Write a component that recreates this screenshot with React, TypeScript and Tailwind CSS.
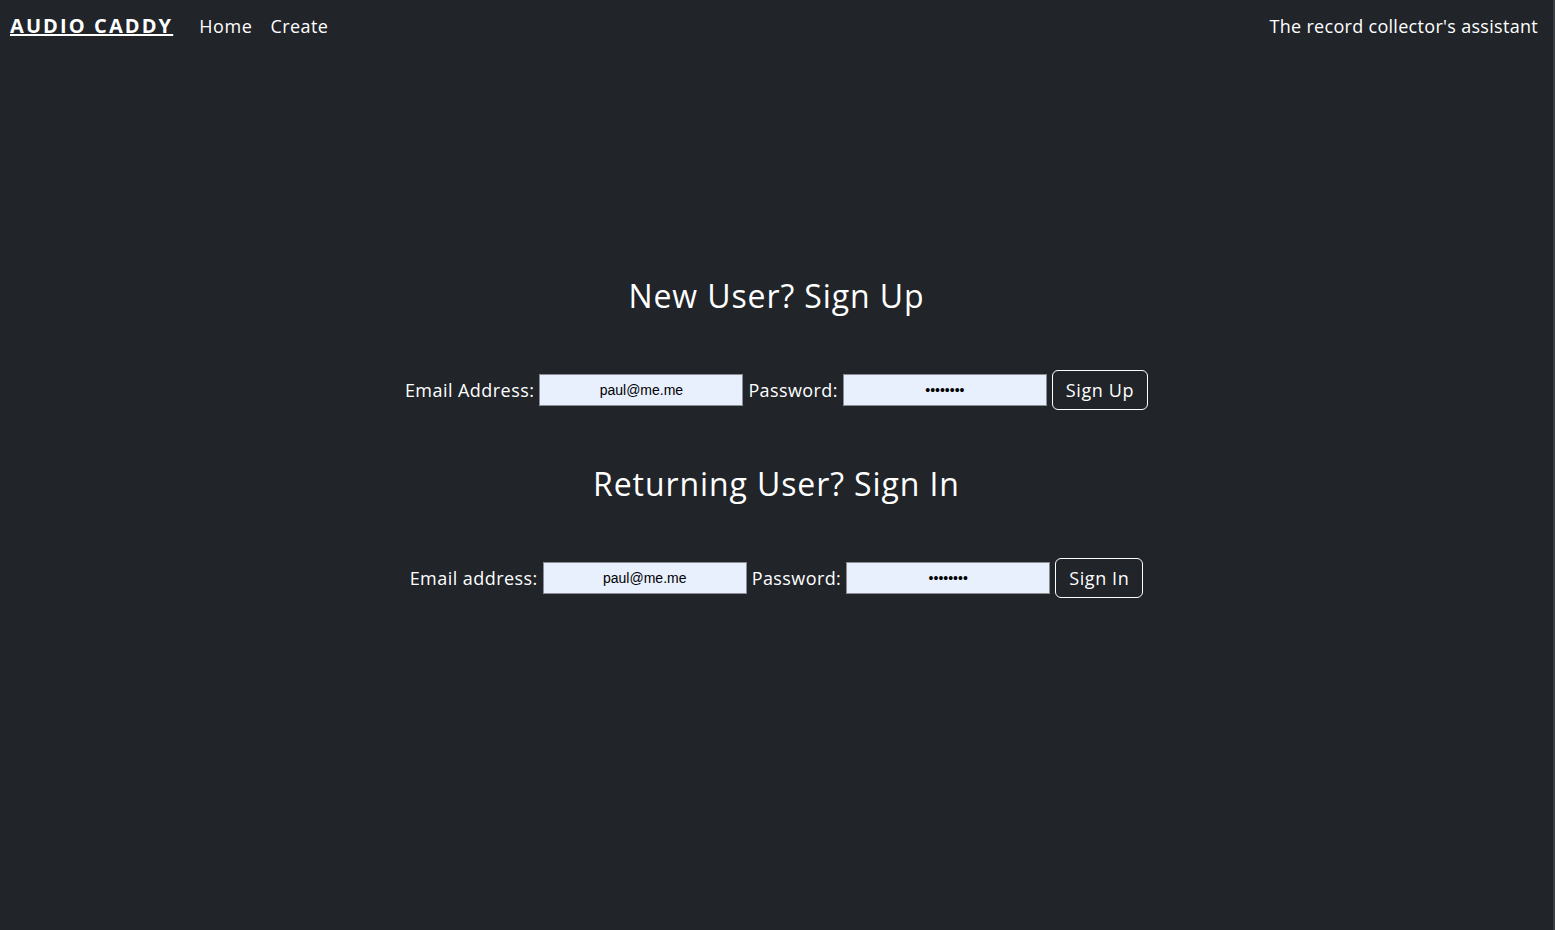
import React from 'react';

const font = { fontFamily: '"Open Sans", "Noto Sans", sans-serif' };

const AuthRow: React.FC<{ emailLabel: string; button: string }> = ({ emailLabel, button }) => (
  <form className="flex items-center h-[40px] gap-[5px]" onSubmit={(e) => e.preventDefault()}>
    <label className="text-[18px] text-white tracking-[0.45px]">{emailLabel}</label>
    <input
      type="email"
      defaultValue="paul@me.me"
      className="w-[204px] h-[32px] bg-[#e8f0fe] border border-[#8a8d93] text-center text-[14px] text-black font-['Liberation_Sans',sans-serif] outline-none"
    />
    <label className="text-[18px] text-white tracking-[0.4px]">Password:</label>
    <input
      type="password"
      defaultValue="password"
      className="w-[204px] h-[32px] bg-[#e8f0fe] border border-[#8a8d93] text-center text-[14px] text-black font-['Liberation_Sans',sans-serif] outline-none"
    />
    <button className="h-[40px] px-[13px] border border-white rounded-[6px] text-[18px] tracking-[0.6px] text-white">
      {button}
    </button>
  </form>
);

export default function App() {
  return (
    <div className="min-h-[930px] bg-[#212429] text-white border-r-2 border-[#3a3d42]" style={font}>
      <nav className="h-[52px] flex items-center pl-[10px] pr-[15px]">
        <a className="text-[20px] font-bold underline tracking-[2.1px]" href="#">AUDIO CADDY</a>
        <a className="ml-[26px] text-[18px] tracking-[0.6px]" href="#">Home</a>
        <a className="ml-[18px] text-[18px] tracking-[0.4px]" href="#">Create</a>
        <span className="ml-auto text-[18px] tracking-[0.3px]">The record collector's assistant</span>
      </nav>
      <main className="flex flex-col items-center pt-[225px]">
        <h2 className="text-[32px] leading-[38px] tracking-[0.9px]">New User? Sign Up</h2>
        <div className="mt-[55px]">
          <AuthRow emailLabel="Email Address:" button="Sign Up" />
        </div>
        <h2 className="mt-[55px] text-[32px] leading-[38px] tracking-[0.9px]">Returning User? Sign In</h2>
        <div className="mt-[55px]">
          <AuthRow emailLabel="Email address:" button="Sign In" />
        </div>
      </main>
    </div>
  );
}
